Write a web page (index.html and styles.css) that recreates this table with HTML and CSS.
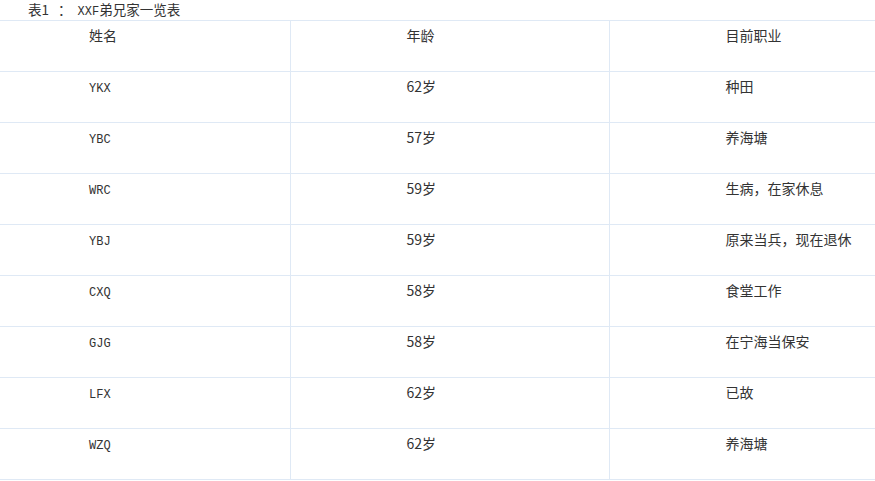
FILE: index.html
```html
<!DOCTYPE html>
<html lang="zh">
<head>
<meta charset="utf-8">
<title>XXF弟兄家一览表</title>
<link rel="stylesheet" href="styles.css">
</head>
<body>
<div class="page">
  <div class="caption">表1 <span class="gap">：</span><span class="latin">XXF</span>弟兄家一览表</div>
  <table class="sheet">
    <colgroup><col class="c1"><col class="c2"><col class="c3"></colgroup>
    <tr><td>姓名</td><td>年龄</td><td>目前职业</td></tr>
    <tr><td><span class="latin">YKX</span></td><td>62岁</td><td>种田</td></tr>
    <tr><td><span class="latin">YBC</span></td><td>57岁</td><td>养海塘</td></tr>
    <tr><td><span class="latin">WRC</span></td><td>59岁</td><td>生病，在家休息</td></tr>
    <tr><td><span class="latin">YBJ</span></td><td>59岁</td><td>原来当兵，现在退休</td></tr>
    <tr><td><span class="latin">CXQ</span></td><td>58岁</td><td>食堂工作</td></tr>
    <tr><td><span class="latin">GJG</span></td><td>58岁</td><td>在宁海当保安</td></tr>
    <tr><td><span class="latin">LFX</span></td><td>62岁</td><td>已故</td></tr>
    <tr><td><span class="latin">WZQ</span></td><td>62岁</td><td>养海塘</td></tr>
  </table>
</div>
</body>
</html>
```
FILE: styles.css
```css
html, body {
  margin: 0;
  padding: 0;
  background: #ffffff;
}
body {
  font-family: "Noto Sans CJK SC", "DejaVu Sans", sans-serif;
  font-size: 14px;
  color: #333333;
}
.page {
  width: 875px;
  height: 481px;
  overflow: hidden;
}
.caption {
  height: 20px;
  line-height: 18px;
  padding-left: 28px;
  font-size: 13.5px;
  box-sizing: border-box;
}
.caption .gap {
  display: inline-block;
  margin: 0 6px 0 6px;
}
.latin {
  font-family: "Liberation Mono", monospace;
  font-size: 12px;
}
.sheet {
  border-collapse: collapse;
  table-layout: fixed;
  width: 930px;
}
.sheet .c1 { width: 290px; }
.sheet .c2 { width: 319px; }
.sheet .c3 { width: 321px; }
.sheet td {
  border: 1px solid #dfe9f5;
  height: 51px;
  padding: 5px 0 0 116px;
  box-sizing: border-box;
  vertical-align: top;
  line-height: 18px;
  white-space: nowrap;
}
.sheet td:first-child {
  border-left: none;
  padding-left: 89px;
}
```
